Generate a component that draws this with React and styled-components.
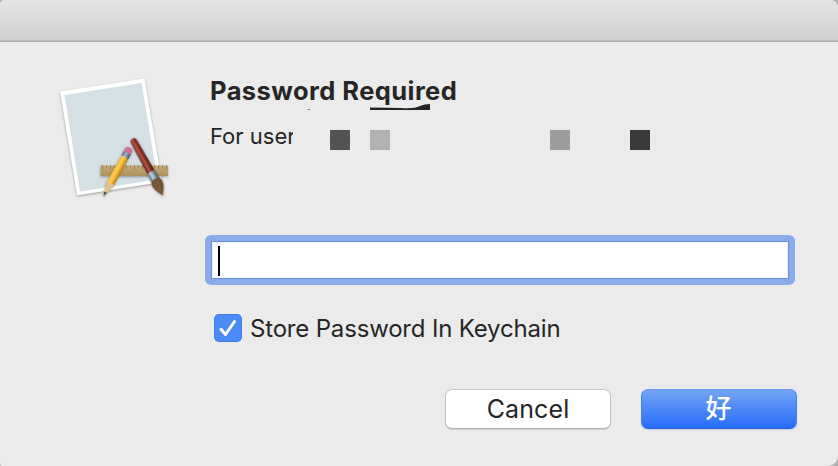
import React from "react";
import styled, { createGlobalStyle } from "styled-components";

const GlobalStyle = createGlobalStyle`
  *, *::before, *::after { box-sizing: border-box; }
  body { margin: 0; background: #b2b2b2; overflow: hidden; }
`;

const Window = styled.main`
  display: flex;
  flex-direction: column;
  width: 838px;
  height: 466px;
  overflow: hidden;
  border-radius: 5px 8px 10px 3px;
  background: #ebebeb;
  color: #262626;
  font-family: Inter, "Noto Sans CJK SC", sans-serif;
`;

const TitleBar = styled.header`
  flex: none;
  height: 42px;
  background: linear-gradient(#e5e5e5, #cfcfcf);
  border-bottom: 1px solid #a9a9a9;
  box-shadow: inset 0 -1px #bdbdbd;
`;

const Content = styled.div`
  flex: 1;
  display: grid;
  grid-template-columns: 150px 1fr;
  padding: 28px 41px 37px 55px;
`;

const AppIcon = styled.svg`
  display: block;
  width: 120px;
  height: 135px;
`;

const Form = styled.form`
  display: flex;
  flex-direction: column;
`;

const Title = styled.h1`
  margin: 6px 0 0 5px;
  font-size: 25.5px;
  line-height: 30px;
  font-weight: 700;
  letter-spacing: ${(p) => p.$tracking}px;
  white-space: nowrap;
`;

const AccountRow = styled.div`
  display: flex;
  height: 50px;
  margin-left: 5px;
`;

const AccountLabel = styled.p`
  flex: none;
  width: 83px;
  margin: 16px 0 0;
  overflow: hidden;
  white-space: nowrap;
  font-size: 22px;
  line-height: 28px;
  letter-spacing: ${(p) => p.$tracking}px;
`;

const Redaction = styled.svg`
  flex: none;
  display: block;
  margin: -4px 0 0 7px;
  width: 360px;
  height: 50px;
`;

const PasswordField = styled.div`
  display: flex;
  align-items: center;
  height: 50px;
  width: 590px;
  margin-top: 79px;
  border: 6px solid #8aabec;
  border-radius: 6px;
  background: #fff;
  box-shadow: inset 0 0 0 1px #6e91d4, inset 0 0 0 2px #f3f3f3;
  padding-left: 7px;
`;

const Caret = styled.span`
  width: 2px;
  height: 30px;
  margin-top: 2px;
  background: #000;
`;

const CheckRow = styled.label`
  display: flex;
  align-items: center;
  gap: 8px;
  height: 28px;
  margin: 29px 0 0 9px;
  font-size: 24px;
  line-height: 28px;
  letter-spacing: ${(p) => p.$tracking}px;
  white-space: nowrap;
`;

const CheckLabel = styled.span`
  padding-top: 2px;
`;

const Checkbox = styled.svg`
  flex: none;
  width: 28px;
  height: 28px;
`;

const Actions = styled.footer`
  display: flex;
  justify-content: flex-end;
  gap: 30px;
  margin-top: 47px;
`;

const Button = styled.button`
  width: ${(p) => (p.$primary ? 156 : 166)}px;
  height: 40px;
  padding: 0 ${(p) => (p.$primary ? 1 : 0)}px 0 0;
  border: 1px solid;
  border-color: ${(p) => (p.$primary ? "#679af0 #4681f0 #2465ec" : "#c6c6c6 #c4c4c4 #b0b0b0")};
  border-radius: 7px;
  background: ${(p) => (p.$primary ? "linear-gradient(#76a5f5, #246bfa) border-box" : "#fff")};
  box-shadow: 0 1px 1px rgba(0, 0, 0, 0.13);
  color: ${(p) => (p.$primary ? "#fff" : "#262626")};
  font: ${(p) => (p.$primary ? 500 : 400)} ${(p) => (p.$primary ? 26 : 25)}px/38px Inter, "Noto Sans CJK SC", sans-serif;
  letter-spacing: ${(p) => p.$tracking || 0}px;
`;

const ticks = Array.from({ length: 17 }, (_, i) => i);

function ApplicationIcon() {
  return (
    <AppIcon viewBox="55 70 120 135" aria-hidden="true">
      <defs>
        <filter id="shadow" x="-20%" y="-20%" width="140%" height="150%" colorInterpolationFilters="sRGB">
          <feDropShadow dx="0" dy="1" stdDeviation="1" floodOpacity="0.35" />
        </filter>
        <linearGradient id="wood" x2="0" y2="1">
          <stop stopColor="#c7ac7b" />
          <stop offset="1" stopColor="#ac9060" />
        </linearGradient>
        <linearGradient id="pencil">
          <stop stopColor="#f0b93a" />
          <stop offset=".4" stopColor="#fbd05a" />
          <stop offset=".6" stopColor="#eeb431" />
          <stop offset="1" stopColor="#bd7d1c" />
        </linearGradient>
        <linearGradient id="handle">
          <stop stopColor="#5b1d16" />
          <stop offset=".4" stopColor="#b25a48" />
          <stop offset=".65" stopColor="#8d3022" />
          <stop offset="1" stopColor="#50160f" />
        </linearGradient>
        <linearGradient id="metal">
          <stop stopColor="#526777" />
          <stop offset=".4" stopColor="#c3d3de" />
          <stop offset="1" stopColor="#384c5b" />
        </linearGradient>
      </defs>
      <path d="M60 91.5 144.5 78.5 162 182 77 195.5Z" fill="#fff" filter="url(#shadow)" />
      <path d="M64.5 95 141.5 83 157.5 179.5 80 191.5Z" fill="#d5e0e4" />
      <g filter="url(#shadow)">
        <path d="M100.5 165.5H168V176H100.5Z" fill="url(#wood)" />
        {ticks.map((i) => (
          <path key={i} d={`M${102.5 + i * 4} 165.5v${i % 2 ? 2 : 3.5}`} stroke="#8c7147" strokeWidth=".8" />
        ))}
      </g>
      <g filter="url(#shadow)" transform="translate(129.2 149.3) rotate(28.7)">
        <path d="M-4 8V39L0 53.5 4 39V8Z" fill="url(#pencil)" />
        <path d="M-4 39Q-2 37.5-.7 39 1 37.5 4 39L0 53.5Z" fill="#e0c291" />
        <path d="m-1.2 49 1.2 4.5 1.2-4.5Z" fill="#37322c" />
        <path d="M-4 3H4V9H-4Z" fill="url(#metal)" />
        <path d="M-4 5H4M-4 7.2H4" stroke="#5c7180" strokeWidth=".7" />
        <path d="M-4 4V1Q-4-2 0-2T4 1V4Z" fill="#cf7097" />
      </g>
      <g filter="url(#shadow)" transform="translate(132.7 139.5) rotate(-29.3)">
        <path d="M-3.3 2Q-3-1 0-1T3.3 2L4 38H-4Z" fill="url(#handle)" />
        <path d="M-4 37H4L4.6 46H-4.6Z" fill="url(#metal)" />
        <path d="M-4.6 46Q0 44.5 4.6 46C7.5 52 3 58-1.2 63.5-3 59-8 53-4.6 46Z" fill="#70502e" />
        <path d="M-2 48Q-4 53-2 58M1 47Q1 53-.5 59" fill="none" stroke="#8c693f" />
      </g>
    </AppIcon>
  );
}

export default function App() {
  return (
    <>
      <GlobalStyle />
      <Window>
        <TitleBar />
        <Content>
          <ApplicationIcon />
          <Form>
            <Title $tracking={0.43}>Password Required</Title>
            <AccountRow>
              <AccountLabel $tracking={0}>For user</AccountLabel>
              <Redaction viewBox="300 102 360 50" aria-hidden="true">
                <path d="M307 110 308.5 109H310V110Z" fill="#777" />
                <path d="M370 107.5 401 108Q414 109 420 106 424 104 430 104V110H370Z" fill="#242424" />
                <path d="M330 130h20v20h-20Z" fill="#535353" />
                <path d="M370 130h20v20h-20Z" fill="#b2b2b2" />
                <path d="M550 130h20v20h-20Z" fill="#9c9c9c" />
                <path d="M630 130h20v20h-20Z" fill="#3a3a3a" />
              </Redaction>
            </AccountRow>
            <PasswordField role="textbox" aria-label="Password">
              <Caret />
            </PasswordField>
            <CheckRow $tracking={-0.18}>
              <Checkbox viewBox="0 0 28 28" role="checkbox" aria-checked="true">
                <rect width="28" height="28" rx="5" fill="#3b7cf1" />
                <rect x="1" y="1" width="26" height="26" rx="4" fill="#4d8af7" />
                <path d="m7 15.3 4.5 5.2L20.5 7.5" fill="none" stroke="#fff" strokeWidth="3" strokeLinecap="round" strokeLinejoin="round" />
              </Checkbox>
              <CheckLabel>Store Password In Keychain</CheckLabel>
            </CheckRow>
            <Actions>
              <Button type="button" $tracking={0.1}>Cancel</Button>
              <Button type="button" $primary>好</Button>
            </Actions>
          </Form>
        </Content>
      </Window>
    </>
  );
}
